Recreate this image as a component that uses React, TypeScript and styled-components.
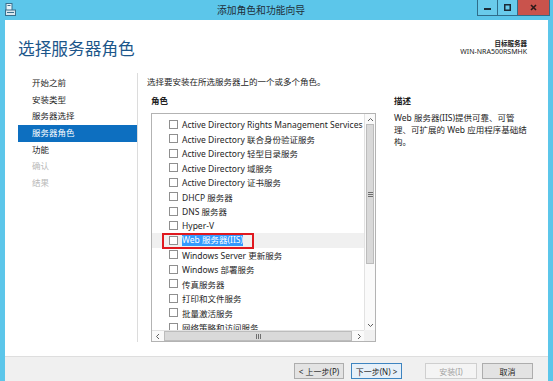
import React from 'react';
import styled, { createGlobalStyle, css } from 'styled-components';

const FONT = `'Noto Sans', 'Noto Sans CJK SC', sans-serif`;

const navItems: { label: string; state: 'normal' | 'active' | 'disabled' }[] = [
  { label: '开始之前', state: 'normal' },
  { label: '安装类型', state: 'normal' },
  { label: '服务器选择', state: 'normal' },
  { label: '服务器角色', state: 'active' },
  { label: '功能', state: 'normal' },
  { label: '确认', state: 'disabled' },
  { label: '结果', state: 'disabled' },
];

const roles: string[] = [
  'Active Directory Rights Management Services',
  'Active Directory 联合身份验证服务',
  'Active Directory 轻型目录服务',
  'Active Directory 域服务',
  'Active Directory 证书服务',
  'DHCP 服务器',
  'DNS 服务器',
  'Hyper-V',
  'Web 服务器(IIS)',
  'Windows Server 更新服务',
  'Windows 部署服务',
  '传真服务器',
  '打印和文件服务',
  '批量激活服务',
  '网络策略和访问服务',
];

const GlobalStyle = createGlobalStyle`
  html, body {
    margin: 0;
    padding: 0;
    background: #ffffff;
  }
  body {
    font-family: ${FONT};
  }
`;

export default function App() {
  return (
    <>
      <GlobalStyle />
      <Window>
        <TitleBar>
          <AppIcon>
            <svg width='11' height='13' viewBox='0 0 11 13'>
              <rect x='1' y='0.5' width='6' height='7' fill='#e8f4fa' stroke='#3a6f8c' />
              <rect x='2.5' y='2' width='3' height='1' fill='#3a6f8c' />
              <rect x='0.5' y='7' width='10' height='5.5' fill='#d9e6ee' stroke='#3a6f8c' />
              <rect x='2' y='9' width='7' height='1' fill='#3a6f8c' />
            </svg>
          </AppIcon>
          <WindowTitle>添加角色和功能向导</WindowTitle>
          <Controls>
            <CtrlButton>
              <svg width='7' height='7' viewBox='0 0 7 7'>
                <rect x='0' y='4' width='7' height='2' fill='#1b2b36' />
              </svg>
            </CtrlButton>
            <CtrlButton>
              <svg width='7' height='7' viewBox='0 0 7 7'>
                <rect x='0.75' y='0.75' width='5.5' height='5.5' fill='none' stroke='#1b2b36' strokeWidth='1.5' />
              </svg>
            </CtrlButton>
            <CtrlButton $close>
              <svg width='7' height='7' viewBox='0 0 7 7'>
                <path d='M1 1 L6 6 M6 1 L1 6' stroke='#2a1a1a' strokeWidth='1.6' />
              </svg>
            </CtrlButton>
          </Controls>
        </TitleBar>

        <Client>
          <Header>
            <PageTitle>选择服务器角色</PageTitle>
            <ServerInfo>
              <ServerLabel>目标服务器</ServerLabel>
              <ServerName>WIN-NRA500RSMHK</ServerName>
            </ServerInfo>
          </Header>

          <Body>
            <Nav>
              {navItems.map((v) => (
                <NavItem key={v.label} $state={v.state}>
                  {v.label}
                </NavItem>
              ))}
            </Nav>

            <Main>
              <RolesColumn>
                <Intro>选择要安装在所选服务器上的一个或多个角色。</Intro>
                <SectionLabel>角色</SectionLabel>
                <ListBox>
                  <Rows>
                    {roles.map((r) => {
                      const picked = r === 'Web 服务器(IIS)';
                      return (
                        <Row key={r} $hover={picked}>
                          <Check />
                          {picked ? <Selected>{r}</Selected> : <span>{r}</span>}
                          {picked && <Marker />}
                        </Row>
                      );
                    })}
                  </Rows>
                  <VScroll>
                    <ArrowBox>
                      <svg width='7' height='5' viewBox='0 0 7 5'>
                        <path d='M1 4 L3.5 1.5 L6 4' fill='none' stroke='#606060' />
                      </svg>
                    </ArrowBox>
                    <VTrack>
                      <VThumb>
                        <Grip $vertical />
                      </VThumb>
                    </VTrack>
                    <ArrowBox>
                      <svg width='7' height='5' viewBox='0 0 7 5'>
                        <path d='M1 1 L3.5 3.5 L6 1' fill='none' stroke='#606060' />
                      </svg>
                    </ArrowBox>
                  </VScroll>
                  <HScroll>
                    <ArrowBox>
                      <svg width='5' height='7' viewBox='0 0 5 7'>
                        <path d='M4 1 L1.5 3.5 L4 6' fill='none' stroke='#606060' />
                      </svg>
                    </ArrowBox>
                    <HThumb>
                      <Grip />
                    </HThumb>
                    <ArrowBox>
                      <svg width='5' height='7' viewBox='0 0 5 7'>
                        <path d='M1 1 L3.5 3.5 L1 6' fill='none' stroke='#606060' />
                      </svg>
                    </ArrowBox>
                  </HScroll>
                  <Corner />
                </ListBox>
              </RolesColumn>

              <DescColumn>
                <SectionLabel>描述</SectionLabel>
                <DescText>
                  Web 服务器(IIS)提供可靠、可管
                  <br />
                  理、可扩展的 Web 应用程序基础结
                  <br />
                  构。
                </DescText>
              </DescColumn>
            </Main>
          </Body>

          <Footer>
            <Button $w={50} $gap={0}>&lt; 上一步(P)</Button>
            <Button $w={51} $gap={7} $primary>
              下一步(N) &gt;
            </Button>
            <Button $w={52} $gap={23} $disabled>
              安装(I)
            </Button>
            <Button $w={51} $gap={5}>取消</Button>
          </Footer>
        </Client>
      </Window>
    </>
  );
}

const Window = styled.div`
  width: 553px;
  height: 381px;
  background: #5cc6ea;
  display: flex;
  flex-direction: column;
  overflow: hidden;
`;

const TitleBar = styled.div`
  height: 20px;
  flex-shrink: 0;
  display: grid;
  grid-template-columns: 1fr auto 1fr;
  align-items: start;
`;

const AppIcon = styled.div`
  padding: 3px 0 0 5px;
  display: flex;
`;

const WindowTitle = styled.div`
  padding: 4px 31px 0 0;
  font-size: 9.8px;
  line-height: 13px;
  color: #1f2f3a;
`;

const Controls = styled.div`
  justify-self: end;
  display: flex;
  margin-right: 3px;
`;

const CtrlButton = styled.div<{ $close?: boolean }>`
  width: ${(p) => (p.$close ? '31px' : '19px')};
  height: 15px;
  border: 1px solid #2f6d8a;
  border-top: none;
  margin-left: -1px;
  display: flex;
  align-items: center;
  justify-content: center;
  background: ${(p) => (p.$close ? '#c9534c' : '#69cbeb')};
`;

const Client = styled.div`
  flex: 1;
  min-height: 0;
  margin: 0 5px;
  background: #ffffff;
  display: flex;
  flex-direction: column;
  font-size: 8.5px;
  color: #1e1e1e;
`;

const Header = styled.div`
  height: 53px;
  flex-shrink: 0;
  display: flex;
  justify-content: space-between;
  padding: 0 21px 0 13px;
  box-sizing: border-box;
`;

const PageTitle = styled.h1`
  margin: 19px 0 0;
  font-size: 16.7px;
  line-height: 20px;
  font-weight: 400;
  color: #1c568a;
`;

const ServerInfo = styled.div`
  margin-top: 20px;
  text-align: right;
  font-size: 6.5px;
  line-height: 7.5px;
  color: #222;
`;

const ServerLabel = styled.div`
  font-weight: 700;
`;

const ServerName = styled.div`
  font-size: 7px;
`;

const Body = styled.div`
  flex: 1;
  min-height: 0;
  display: flex;
  padding-bottom: 14px;
`;

const Nav = styled.div`
  width: 133px;
  flex-shrink: 0;
  padding-top: 2px;
  border-right: 1px solid #dcdcdc;
  box-sizing: border-box;
`;

const NavItem = styled.div<{ $state: 'normal' | 'active' | 'disabled' }>`
  height: 16.7px;
  line-height: 16.7px;
  margin-left: 13px;
  padding-left: 14px;
  color: #1e1e1e;
  ${(p) =>
    p.$state === 'active' &&
    css`
      background: #0d6fc0;
      color: #ffffff;
    `}
  ${(p) =>
    p.$state === 'disabled' &&
    css`
      color: #b9b9b9;
    `}
`;

const Main = styled.div`
  flex: 1;
  min-height: 0;
  display: flex;
  padding: 3px 0 0 13px;
`;

const RolesColumn = styled.div`
  width: 225px;
  flex-shrink: 0;
  min-height: 0;
  display: flex;
  flex-direction: column;
`;

const Intro = styled.div`
  line-height: 12px;
  margin-left: -4px;
`;

const SectionLabel = styled.div`
  margin-top: 7px;
  line-height: 12px;
  font-weight: 700;
`;

const ListBox = styled.div`
  margin-top: 6px;
  flex: 1;
  min-height: 0;
  border: 1px solid #b3b3b3;
  display: grid;
  grid-template-columns: 1fr 11px;
  grid-template-rows: minmax(0, 1fr) 11px;
  overflow: hidden;
`;

const Rows = styled.div`
  padding-top: 3px;
  overflow: hidden;
  white-space: nowrap;
`;

const Row = styled.div<{ $hover?: boolean }>`
  position: relative;
  height: 14.5px;
  display: flex;
  align-items: center;
  padding-left: 17px;
  background: ${(p) => (p.$hover ? '#f0f0f0' : 'transparent')};
`;

const Check = styled.span`
  width: 7px;
  height: 7px;
  border: 1px solid #8f8f8f;
  background: #fff;
  margin-right: 4px;
  flex-shrink: 0;
`;

const Selected = styled.span`
  background: #3399ff;
  color: #ffffff;
  line-height: 12px;
`;

const Marker = styled.span`
  position: absolute;
  left: 10px;
  top: 0;
  width: 88px;
  height: 12px;
  border: 2px solid #e0191f;
`;

const VScroll = styled.div`
  grid-row: 1;
  grid-column: 2;
  display: flex;
  flex-direction: column;
  border-left: 1px solid #e2e2e2;
  background: #fafafa;
  min-height: 0;
`;

const ArrowBox = styled.div`
  width: 10px;
  height: 10px;
  display: flex;
  align-items: center;
  justify-content: center;
  flex-shrink: 0;
`;

const VTrack = styled.div`
  flex: 1;
  min-height: 0;
  display: flex;
  flex-direction: column;
  padding: 0 1px;
`;

const VThumb = styled.div`
  height: 138px;
  background: #d9d9d9;
  border: 1px solid #bcbcbc;
  display: flex;
  align-items: center;
  justify-content: center;
`;

const HScroll = styled.div`
  grid-row: 2;
  grid-column: 1;
  display: flex;
  align-items: center;
  border-top: 1px solid #e2e2e2;
  background: #fafafa;
`;

const HThumb = styled.div`
  flex: 1;
  height: 8px;
  margin: 0 2px;
  background: #d9d9d9;
  border: 1px solid #bcbcbc;
  display: flex;
  align-items: center;
  justify-content: center;
`;

const Grip = styled.span<{ $vertical?: boolean }>`
  width: 5px;
  height: 5px;
  background: ${(p) =>
    p.$vertical
      ? 'repeating-linear-gradient(to bottom, #6f6f6f 0 1px, transparent 1px 2px)'
      : 'repeating-linear-gradient(to right, #6f6f6f 0 1px, transparent 1px 2px)'};
`;

const Corner = styled.div`
  grid-row: 2;
  grid-column: 2;
  background: #f0f0f0;
`;

const DescColumn = styled.div`
  margin-left: 18px;
  padding-top: 12px;
  white-space: nowrap;
`;

const DescText = styled.div`
  margin-top: 5px;
  line-height: 12px;
`;

const Footer = styled.div`
  height: 25px;
  flex-shrink: 0;
  box-sizing: border-box;
  border-top: 1px solid #dedede;
  background: #f0f0f0;
  display: flex;
  justify-content: flex-end;
  align-items: flex-start;
  padding: 6px 15px 0 0;
`;

const Button = styled.div<{ $w: number; $gap: number; $primary?: boolean; $disabled?: boolean }>`
  width: ${(p) => p.$w}px;
  height: 16px;
  margin-left: ${(p) => p.$gap}px;
  box-sizing: border-box;
  display: flex;
  align-items: center;
  justify-content: center;
  font-size: 8px;
  border: 1px solid ${(p) => (p.$primary ? '#3d84c0' : p.$disabled ? '#cfcfcf' : '#adadad')};
  background: ${(p) => (p.$primary ? '#e6f0f9' : p.$disabled ? '#f4f4f4' : '#e3e3e3')};
  color: ${(p) => (p.$disabled ? '#a3a3a3' : '#1e1e1e')};
`;
